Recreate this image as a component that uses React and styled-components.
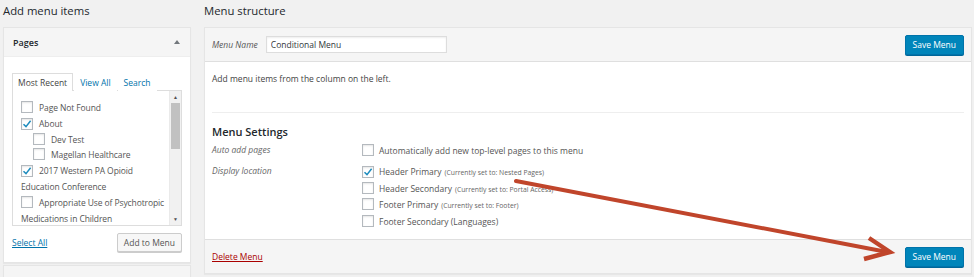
import styled, { createGlobalStyle } from "styled-components";

const GlobalStyle = createGlobalStyle`
  html, body {
    margin: 0;
    padding: 0;
    background: #f1f1f1;
    font-family: "Open Sans", "Noto Sans", sans-serif;
    font-size: 8.5px;
    color: #444;
  }
`;

const pages = [
  { label: "Page Not Found", checked: false, depth: 0 },
  { label: "About", checked: true, depth: 0 },
  { label: "Dev Test", checked: false, depth: 1 },
  { label: "Magellan Healthcare", checked: false, depth: 1 },
  { label: "2017 Western PA Opioid Education Conference", checked: true, depth: 0 },
  { label: "Appropriate Use of Psychotropic Medications in Children", checked: false, depth: 0 },
];

const locations = [
  { label: "Header Primary", note: "(Currently set to: Nested Pages)", checked: true },
  { label: "Header Secondary", note: "(Currently set to: Portal Access)", checked: false },
  { label: "Footer Primary", note: "(Currently set to: Footer)", checked: false },
  { label: "Footer Secondary (Languages)", note: "", checked: false },
];

const Check = ({ checked }) => (
  <Box>
    {checked && (
      <svg width="10" height="10" viewBox="0 0 10 10">
        <path d="M1.5 5.2 L4 7.6 L8.6 1.8" fill="none" stroke="#1e8cbe" strokeWidth="1.5" />
      </svg>
    )}
  </Box>
);

const App = () => {
  return (
    <>
      <GlobalStyle />
      <Page>
        <LeftCol>
          <Heading>Add menu items</Heading>
          <Panel>
            <PanelHead>
              <span>Pages</span>
              <Caret />
            </PanelHead>
            <PanelBody>
              <Tabs>
                <Tab $active>Most Recent</Tab>
                <Tab>View All</Tab>
                <Tab>Search</Tab>
              </Tabs>
              <ListBox>
                <List>
                  {pages.map((p) => (
                    <Item key={p.label} $depth={p.depth}>
                      <Check checked={p.checked} />
                      {p.label}
                    </Item>
                  ))}
                </List>
                <Scrollbar>
                  <ScrollArrow>▲</ScrollArrow>
                  <Thumb />
                  <ScrollArrow>▼</ScrollArrow>
                </Scrollbar>
              </ListBox>
              <Actions>
                <TextLink>Select All</TextLink>
                <Button>Add to Menu</Button>
              </Actions>
            </PanelBody>
          </Panel>
          <Panel>
            <PanelHead>
              <span>Posts</span>
              <Caret />
            </PanelHead>
          </Panel>
        </LeftCol>

        <RightCol>
          <Heading>Menu structure</Heading>
          <MenuBox>
            <MenuHeader>
              <NameLabel>Menu Name</NameLabel>
              <NameInput defaultValue="Conditional Menu" />
              <Primary>Save Menu</Primary>
            </MenuHeader>
            <MenuBody>
              <Hint>Add menu items from the column on the left.</Hint>
              <Divider />
              <SubHeading>Menu Settings</SubHeading>
              <SettingRow>
                <SettingLabel>Auto add pages</SettingLabel>
                <Options>
                  <Option>
                    <Check />
                    Automatically add new top-level pages to this menu
                  </Option>
                </Options>
              </SettingRow>
              <SettingRow>
                <SettingLabel>Display location</SettingLabel>
                <Options>
                  {locations.map((l) => (
                    <Option key={l.label}>
                      <Check checked={l.checked} />
                      {l.label}
                      {l.note && <Note>{l.note}</Note>}
                    </Option>
                  ))}
                </Options>
              </SettingRow>
            </MenuBody>
            <MenuFooter>
              <DeleteLink>Delete Menu</DeleteLink>
              <Primary>Save Menu</Primary>
            </MenuFooter>
          </MenuBox>
        </RightCol>

        <Arrow width="974" height="277" viewBox="0 0 974 277">
          <path d="M516 181 L887 252" stroke="#c0452b" strokeWidth="4" strokeLinecap="round" fill="none" />
          <path d="M869 238 L890 252 L864 259" stroke="#c0452b" strokeWidth="4.5" strokeLinejoin="miter" fill="none" />
        </Arrow>
      </Page>
    </>
  );
};

const Page = styled.div`
  position: relative;
  display: flex;
  gap: 13px;
  padding: 0 3px;
  height: 277px;
  overflow: hidden;
`;

const LeftCol = styled.div`
  width: 188px;
  flex-shrink: 0;
`;

const RightCol = styled.div`
  flex: 1;
`;

const Heading = styled.h2`
  margin: 0;
  height: 27px;
  line-height: 21px;
  font-size: 11.3px;
  font-weight: 400;
  color: #23282d;
`;

const Panel = styled.div`
  background: #fff;
  border: 1px solid #e5e5e5;
  box-shadow: 0 1px 1px rgba(0, 0, 0, 0.04);
  margin-bottom: 2px;
`;

const PanelHead = styled.div`
  height: 28px;
  display: flex;
  align-items: center;
  justify-content: space-between;
  padding: 0 10px 0 9px;
  background: #f5f5f5;
  border-bottom: 1px solid #eee;
  font-size: 9px;
  font-weight: 600;
  color: #23282d;
`;

const Caret = styled.span`
  width: 0;
  height: 0;
  border-left: 3px solid transparent;
  border-right: 3px solid transparent;
  border-bottom: 4px solid #72777c;
`;

const PanelBody = styled.div`
  padding: 15px 8px 10px;
`;

const Tabs = styled.div`
  display: flex;
  align-items: flex-end;
  height: 18px;
`;

const Tab = styled.span`
  height: 17px;
  line-height: 17px;
  padding: 0 5px;
  margin-right: 1px;
  color: ${(p) => (p.$active ? "#444" : "#0073aa")};
  background: #fff;
  border: 1px solid ${(p) => (p.$active ? "#ddd" : "transparent")};
  border-bottom: none;
  position: relative;
  top: 1px;
`;

const ListBox = styled.div`
  display: flex;
  height: 134px;
  border: 1px solid #ddd;
  background: #fff;
`;

const List = styled.div`
  flex: 1;
  padding: 9px 1px 0 8px;
  overflow: hidden;
`;

const Item = styled.div`
  line-height: 15.8px;
  padding-left: ${(p) => p.$depth * 12}px;
  color: #555;
  letter-spacing: -0.1px;
  & > span:first-child {
    margin-right: 6px;
    vertical-align: -2px;
  }
`;

const Box = styled.span`
  display: inline-flex;
  align-items: center;
  justify-content: center;
  width: 10px;
  height: 10px;
  border: 1px solid #b4b9be;
  background: #fff;
  box-shadow: inset 0 1px 2px rgba(0, 0, 0, 0.1);
`;

const Scrollbar = styled.div`
  width: 11px;
  flex-shrink: 0;
  display: flex;
  flex-direction: column;
  background: #f1f1f1;
  border-left: 1px solid #eaeaea;
`;

const ScrollArrow = styled.div`
  height: 12px;
  font-size: 5px;
  line-height: 12px;
  text-align: center;
  color: #505050;
`;

const Thumb = styled.div`
  height: 46px;
  margin: 0 1px;
  background: #c1c1c1;
  flex-shrink: 0;
  & + div { margin-top: auto; }
`;

const Actions = styled.div`
  display: flex;
  justify-content: space-between;
  align-items: center;
  margin-top: 7px;
`;

const TextLink = styled.a`
  color: #0073aa;
  text-decoration: underline;
`;

const Button = styled.button`
  height: 19px;
  padding: 0 6px;
  font-family: inherit;
  font-size: 8.5px;
  color: #555;
  background: #f7f7f7;
  border: 1px solid #ccc;
  border-radius: 2px;
  box-shadow: 0 1px 0 #ccc;
`;

const MenuBox = styled.div`
  width: 766px;
  height: 245px;
  display: flex;
  flex-direction: column;
  background: #fff;
  border: 1px solid #e5e5e5;
  box-shadow: 0 1px 1px rgba(0, 0, 0, 0.04);
`;

const MenuHeader = styled.div`
  height: 33px;
  display: flex;
  align-items: center;
  padding: 0 7px 0 7px;
  background: #f5f5f5;
  border-bottom: 1px solid #dfdfdf;
`;

const NameLabel = styled.span`
  font-style: italic;
  color: #555;
  margin-right: 8px;
`;

const NameInput = styled.input`
  width: 171px;
  height: 15px;
  padding: 0 4px;
  font-family: inherit;
  font-size: 8.5px;
  color: #32373c;
  border: 1px solid #ddd;
  box-shadow: inset 0 1px 2px rgba(0, 0, 0, 0.07);
  outline: none;
`;

const Primary = styled.button`
  margin-left: auto;
  height: 20px;
  padding: 0 7px;
  font-family: inherit;
  font-size: 8.5px;
  color: #fff;
  background: #0085ba;
  border: 1px solid #0073aa;
  border-radius: 2px;
  box-shadow: 0 1px 0 #006799;
`;

const MenuBody = styled.div`
  flex: 1;
  padding: 10px 7px 0;
`;

const Hint = styled.p`
  margin: 0;
  line-height: 13px;
`;

const Divider = styled.div`
  height: 1px;
  background: #eee;
  margin: 27px 0 12px;
`;

const SubHeading = styled.h3`
  margin: 0 0 4px;
  font-size: 11px;
  font-weight: 600;
  color: #23282d;
  line-height: 14px;
`;

const SettingRow = styled.div`
  display: flex;
  margin-bottom: 5px;
`;

const SettingLabel = styled.div`
  width: 150px;
  font-style: italic;
  color: #666;
  line-height: 14px;
`;

const Options = styled.div`
  display: flex;
  flex-direction: column;
`;

const Option = styled.label`
  line-height: 15.8px;
  color: #555;
  & > span:first-child {
    margin-right: 5px;
    vertical-align: -2px;
  }
`;

const Note = styled.span`
  font-size: 6.8px;
  margin-left: 3px;
  color: #666;
`;

const MenuFooter = styled.div`
  height: 33px;
  display: flex;
  align-items: center;
  padding: 0 7px;
  background: #f5f5f5;
  border-top: 1px solid #dfdfdf;
`;

const DeleteLink = styled.a`
  color: #a00;
  text-decoration: underline;
`;

const Arrow = styled.svg`
  position: absolute;
  left: 0;
  top: 0;
  pointer-events: none;
`;

export default App;
